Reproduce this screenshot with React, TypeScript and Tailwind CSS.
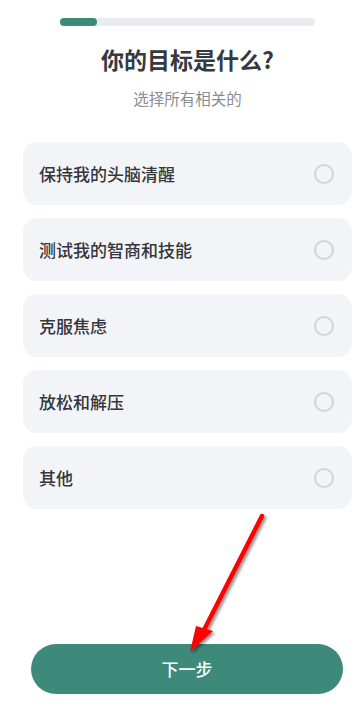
const goals = ["保持我的头脑清醒", "测试我的智商和技能", "克服焦虑", "放松和解压", "其他"];

function GoalCard({ label }: { label: string }) {
  return (
    <div className="flex h-[63px] items-center justify-between rounded-[14px] bg-[#f3f4f8] pl-[16px] pr-[18px]">
      <span className="text-[17px] font-medium leading-[24px] text-[#33363b]">{label}</span>
      <span className="h-[20px] w-[20px] rounded-full border-2 border-[#d3d4d8]" />
    </div>
  );
}

export default function App() {
  return (
    <div
      className="relative flex min-h-[725px] flex-col bg-white pl-[23px] pr-[8px]"
      style={{ fontFamily: '"Noto Sans CJK SC", "Noto Sans", sans-serif' }}
    >
      <div className="mx-[37px] mt-[18px] h-[8px] rounded-full bg-[#e8ebef]">
        <div className="h-full w-[37px] rounded-full bg-[#3d8a7a]" />
      </div>

      <h1 className="mt-[18px] text-center text-[23px] font-bold leading-[30px] text-[#36393e]">
        你的目标是什么?
      </h1>
      <p className="mt-[13px] text-center text-[15.5px] leading-[22px] text-[#8a8d93]">选择所有相关的</p>

      <div className="mt-[33px] flex flex-col gap-[13px]">
        {goals.map((g) => (
          <GoalCard key={g} label={g} />
        ))}
      </div>

      <div className="mt-auto pb-[31px] pl-[8px] pr-[9px]">
        <button className="flex h-[50px] w-full items-center justify-center rounded-full bg-[#3d8a7a] text-[17px] font-medium text-white">
          下一步
        </button>
      </div>

      {/* annotation arrow */}
      <svg className="pointer-events-none absolute left-0 top-0" width="360" height="725" viewBox="0 0 360 725">
        <defs>
          <filter id="shadow" x="-20%" y="-20%" width="140%" height="140%">
            <feDropShadow dx="2" dy="2" stdDeviation="1.5" floodColor="#000" floodOpacity="0.45" />
          </filter>
        </defs>
        <g filter="url(#shadow)">
          <line x1="262" y1="516" x2="204" y2="630" stroke="#ff0000" strokeWidth="4.5" strokeLinecap="round" />
          <polygon points="190,652 196,626 213,631" fill="#ff0000" />
        </g>
      </svg>
    </div>
  );
}
